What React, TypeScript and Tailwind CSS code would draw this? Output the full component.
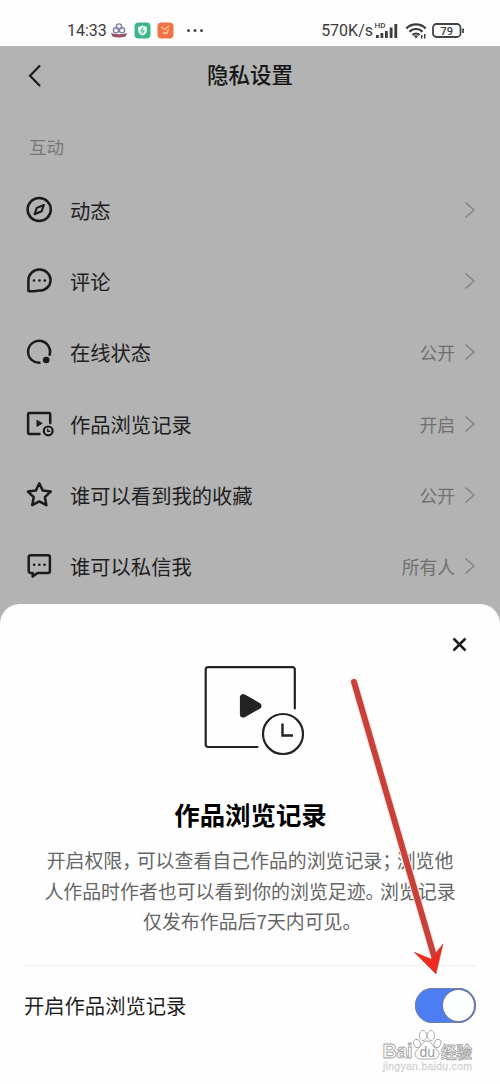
import React from 'react';

interface SettingRow {
  label: string;
  value?: string;
  icon: React.ReactNode;
}

function Icon({ children }: { children: React.ReactNode }) {
  return (
    <svg
      width="30"
      height="30"
      viewBox="0 0 30 30"
      fill="none"
      stroke="#1b1b1b"
      strokeWidth="2.5"
      strokeLinecap="round"
      strokeLinejoin="round"
      className="shrink-0"
    >
      {children}
    </svg>
  );
}

const rows: SettingRow[] = [
  {
    label: '动态',
    icon: (
      <Icon>
        <circle cx="15.2" cy="14.5" r="11.6" />
        <path d="M19.8 10l-2.2 6.3-7 2.9 2.2-6.3z" strokeWidth="2.1" />
      </Icon>
    ),
  },
  {
    label: '评论',
    icon: (
      <Icon>
        <path d="M4.4 25V14.4A11.1 10.5 0 1 1 15.5 24.6Q10 25.6 4.4 25z" />
        <path d="M10 14.5h.1M15.4 14.5h.1M20.8 14.5h.1" strokeWidth="2.6" />
      </Icon>
    ),
  },
  {
    label: '在线状态',
    value: '公开',
    icon: (
      <Icon>
        <path d="M16.5 25.7A11 11 0 1 1 25.3 18.8" strokeLinecap="butt" />
        <circle cx="22.2" cy="23" r="3.3" fill="#1b1b1b" stroke="none" />
      </Icon>
    ),
  },
  {
    label: '作品浏览记录',
    value: '开启',
    icon: (
      <Icon>
        <path d="M15.5 25H5.3a1.2 1.2 0 0 1-1.2-1.2V5.2A1.2 1.2 0 0 1 5.3 4H25a1.2 1.2 0 0 1 1.2 1.2V14" />
        <path d="M13 11.6v5.8l4.8-2.9z" fill="#1b1b1b" strokeWidth="1" />
        <circle cx="24.2" cy="21.9" r="4.4" strokeWidth="2.2" />
        <path d="M23.7 20.3v2h2" strokeWidth="1.4" />
      </Icon>
    ),
  },
  {
    label: '谁可以看到我的收藏',
    value: '公开',
    icon: (
      <Icon>
        <path d="M15.3 3.3l3.5 7.3 7.9 1-5.8 5.6 1.5 8-7.1-3.9-7.1 3.9 1.5-8-5.8-5.6 7.9-1z" />
      </Icon>
    ),
  },
  {
    label: '谁可以私信我',
    value: '所有人',
    icon: (
      <Icon>
        <path d="M6.6 4.2H24a1.9 1.9 0 0 1 1.9 1.9v14A1.9 1.9 0 0 1 24 22H13.5l-4.8 3.6V22H6.6a1.9 1.9 0 0 1-1.9-1.9v-14a1.9 1.9 0 0 1 1.9-1.9z" />
        <path d="M10.1 13.8h.1M15.3 13.8h.1M20.5 13.8h.1" strokeWidth="2.6" />
      </Icon>
    ),
  },
];

function StatusBar() {
  return (
    <div className="flex h-[46px] items-center bg-[#fdfdfd] pt-[15px] pr-[35px] pl-[67px] font-['Roboto','Liberation_Sans',sans-serif] text-[16px] text-[#3c3c3c]">
      <span className="w-[41px] whitespace-nowrap">14:33</span>
      <svg width="100" height="20" viewBox="0 0 100 20" className="ml-[2px]">
        <g fill="none" stroke="#7b83a8" strokeWidth="1.4">
          <circle cx="9" cy="5.5" r="2.6" />
          <circle cx="6" cy="9.3" r="2.6" />
          <circle cx="12" cy="9.3" r="2.6" />
        </g>
        <path d="M1 12q8 2.4 16 0l-1.4 3.6q-6.6 2-13.2 0z" fill="#95506a" />
        <rect x="24.5" y="1.5" width="16" height="16" rx="4" fill="#3eb489" />
        <path d="M32.5 4.5l4.3 1.5v3.8q0 3.2-4.3 4.8-4.3-1.6-4.3-4.8V6z" fill="#effff8" />
        <path d="M33.3 6.5L31 10h3l-2.3 3" fill="none" stroke="#3eb489" strokeWidth="1.1" />
        <rect x="47.5" y="1.5" width="16" height="16" rx="4" fill="#ee7446" />
        <path d="M51.5 6l3 2.5L59 5M53 12h4l1.5-4" fill="none" stroke="#ffc3a0" strokeWidth="1.3" />
        <g fill="#4a4a4a">
          <circle cx="78.5" cy="9.5" r="1.5" />
          <circle cx="85" cy="9.5" r="1.5" />
          <circle cx="91.5" cy="9.5" r="1.5" />
        </g>
      </svg>
      <span className="ml-auto whitespace-nowrap">570K/s</span>
      <svg width="24" height="20" viewBox="0 0 24 20" fill="#3c3c3c" className="ml-[2px]">
        <text x="-0.5" y="7" fontSize="8" fontWeight="500">HD</text>
        <path d="M1 14h2.8v3H1zM5.500 12h2.800v5H5.500zM10 10h2.800v7H10zM14.700 6.500h2.800v10.500h-2.800zM19.400 3h2.800v14h-2.800z" />
      </svg>
      <svg width="22" height="20" viewBox="0 0 22 20" fill="none" stroke="#3c3c3c" strokeWidth="2.2" className="ml-[6px]">
        <path d="M1.3 7.5a13.5 13.5 0 0 1 19.4 0M4.5 10.800a9 9 0 0 1 13 0M7.500 14a5 5 0 0 1 7 0" />
        <path d="M8.5 14.5h5L11 17.5z" fill="#3c3c3c" stroke="none" />
        <path d="M16.7 14v3.5M19.700 13v4.500" strokeWidth="1.5" />
      </svg>
      <svg width="33" height="18" viewBox="0 0 33 18" className="ml-[5px]">
        <rect x="1" y="2" width="27.5" height="13" rx="3.5" fill="none" stroke="#444" strokeWidth="1.8" />
        <path d="M31 6.5V11" stroke="#444" strokeWidth="1.8" />
        <text x="14.8" y="12.5" textAnchor="middle" fontSize="11" fontWeight="500" fill="#3c3c3c">79</text>
      </svg>
    </div>
  );
}

function Header() {
  return (
    <header className="flex h-[58px] items-center pl-[26px]">
      <svg width="18" height="24" viewBox="0 0 18 24" fill="none" stroke="#1c1c1c" strokeWidth="2.2">
        <path d="M14 2.500L4 12.800 14 23" />
      </svg>
      <h1 className="-mt-[2px] ml-[163px] text-[21.5px] leading-8 font-medium text-[#161616]">隐私设置</h1>
    </header>
  );
}

function SettingsList() {
  return (
    <section>
      <h2 className="pt-[31px] pl-[29px] text-[17.5px] leading-6 text-[#777]">互动</h2>
      <ul className="mt-[15px]">
        {rows.map((row) => (
          <li key={row.label} className="flex h-[71.3px] items-center pr-[23px] pl-[24px]">
            {row.icon}
            <span className="ml-4 text-[20.3px] leading-7 text-[#1e1e1e]">{row.label}</span>
            <span className="ml-auto text-[17.8px] leading-6 text-[#707070]">{row.value}</span>
            <svg width="14" height="18" viewBox="0 0 14 18" fill="none" stroke="#838383" strokeWidth="1.5" className="ml-[8px]">
              <path d="M2.5 1.5L11 9l-8.5 7.5" />
            </svg>
          </li>
        ))}
      </ul>
    </section>
  );
}

function Watermark() {
  return (
    <svg
      width="100"
      height="52"
      viewBox="0 0 100 52"
      className="absolute top-[1027px] left-[380px]"
      fill="#fff"
      stroke="#a5a5a5"
      strokeWidth="0.9"
    >
      <text x="2.5" y="31" fontFamily="Liberation Sans, sans-serif" fontWeight="700" fontSize="20" textLength="30">Bai</text>
      <ellipse cx="37" cy="16.5" rx="3.3" ry="4.3" transform="rotate(-20 37 16.5)" />
      <ellipse cx="43" cy="8.5" rx="3.6" ry="5" />
      <ellipse cx="51" cy="8.5" rx="3.6" ry="5" />
      <ellipse cx="57.5" cy="16.5" rx="3.3" ry="4.3" transform="rotate(20 57.5 16.5)" />
      <path d="M47 14c5 0 5 5 9 8 6 5 2 10-3 10H41c-5 0-9-5-3-10 4-3 4-8 9-8z" />
      <text x="39.5" y="29.5" fill="#999" stroke="none" fontFamily="Liberation Sans, sans-serif" fontSize="14">du</text>
      <text x="61" y="30.5" fontFamily="Noto Sans CJK SC, sans-serif" fontWeight="700" fontSize="15.5">经验</text>
      <text x="3" y="43" fill="#ddd" stroke="#ccc" strokeWidth="0.3" fontFamily="Liberation Sans, sans-serif" fontSize="10.5" textLength="89">jingyan.baidu.com</text>
    </svg>
  );
}

// Half-width punctuation with a little air after it
function Mark({ children }: { children: string }) {
  return <span className="pr-[5px] [font-feature-settings:'halt']">{children}</span>;
}

function RecordSheet() {
  return (
    <section className="flex h-[480px] flex-col rounded-t-[20px] bg-[#fefefe]">
      <div className="flex h-[62px] justify-end pt-[33px] pr-[33px]">
        <svg width="15" height="15" viewBox="0 0 15 15" stroke="#1d1d1d" strokeWidth="2.5">
          <path d="M1.5 1.5l12 12M13.5 1.5l-12 12" />
        </svg>
      </div>
      <svg width="102" height="92" viewBox="0 0 102 92" fill="none" stroke="#232323" strokeWidth="2.2" className="ml-[203px]" strokeLinecap="round">
        <path d="M54.5 81H5a2.3 2.3 0 0 1-2.3-2.3V3.4A2.3 2.3 0 0 1 5 1.1h84.5a2.3 2.3 0 0 1 2.3 2.3v39" />
        <path d="M40.2 31.400v16.900l14.900-8.450z" fill="#232323" strokeWidth="6.6" strokeLinejoin="round" />
        <circle cx="80" cy="68" r="20" />
        <path d="M79.5 57.500v12H90" strokeWidth="2.4" strokeLinecap="butt" />
      </svg>
      <h2 className="mt-[38px] pl-px text-center text-[25.4px] leading-9 font-bold text-black">作品浏览记录</h2>
      <div className="mt-[13px] text-center text-[18.9px] leading-[30.5px] whitespace-nowrap text-[#666]">
        <p>开启权限<Mark>，</Mark>可以查看自己作品的浏览记录<Mark>；</Mark>浏览他</p>
        <p>人作品时作者也可以看到你的浏览足迹<Mark>。</Mark>浏览记录</p>
        <p>仅发布作品后7天内可见<Mark>。</Mark></p>
      </div>
      <div className="mx-6 mt-[28px] border-t border-[#eee]" />
      <div className="flex h-[80px] items-center justify-between pr-[24px] pl-[24px]">
        <span className="text-[20.3px] text-[#1e1e1e]">开启作品浏览记录</span>
        <div className="flex h-[35px] w-[61px] justify-end rounded-full bg-[#4d7df3] p-[2px] ring-1 ring-[#7480a0] ring-inset">
          <div className="size-[31px] rounded-full bg-[#fdfefe] ring-1 ring-[#6f7a94]" />
        </div>
      </div>
    </section>
  );
}

export default function App() {
  return (
    <main className="relative h-[1084px] w-[500px] overflow-hidden bg-[#b3b3b3] font-['Noto_Sans_CJK_SC',sans-serif]">
      <div className="h-[604px]">
        <StatusBar />
        <Header />
        <SettingsList />
      </div>
      <RecordSheet />
      <Watermark />
      {/* Pointer to the switch */}
      <svg width="120" height="310" viewBox="0 0 120 310" className="absolute top-[670px] left-[340px]">
        <path d="M14 12L94 286" stroke="#ffe3dc" strokeWidth="8" strokeLinecap="round" />
        <path d="M14 12L94 286" stroke="#c8403a" strokeWidth="6" strokeLinecap="round" />
        <path d="M74 282l17 7 12-15-7 30z" fill="#ed2b20" stroke="#b84a40" strokeWidth="0.6" />
      </svg>
    </main>
  );
}
